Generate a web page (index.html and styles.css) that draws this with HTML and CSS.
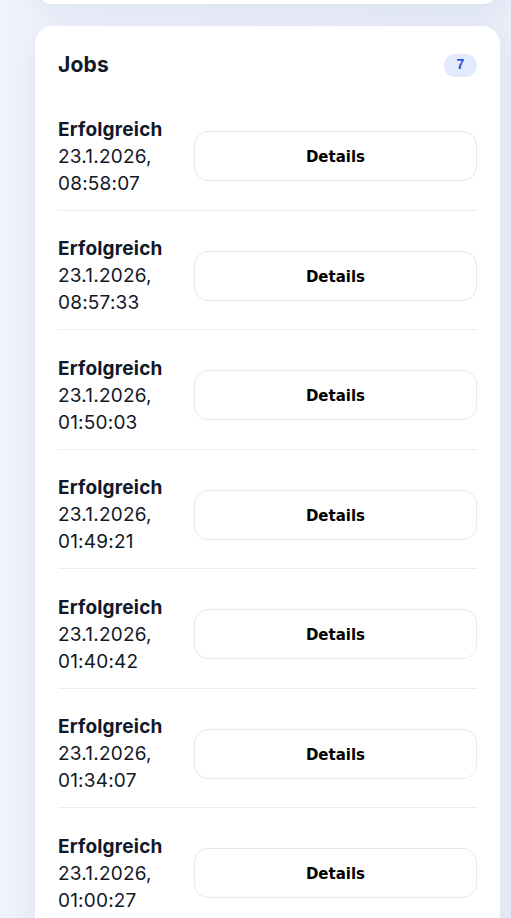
FILE: index.html
```html
<!DOCTYPE html>
<html lang="de">
<head>
  <meta charset="UTF-8">
  <meta name="viewport" content="width=device-width, initial-scale=1.0">
  <title>Jobs</title>
  <link rel="stylesheet" href="styles.css">
</head>
<body>

  <div class="page">
    <div class="card card-prev"></div>

    <div class="card jobs">
      <div class="jobs-header">
        <h2>Jobs</h2>
        <span class="badge">7</span>
      </div>

      <div class="job-row">
        <div class="job-info">
          <strong>Erfolgreich</strong>
          <span>23.1.2026, 08:58:07</span>
        </div>
        <button class="details-btn">Details</button>
      </div>

      <div class="job-row">
        <div class="job-info">
          <strong>Erfolgreich</strong>
          <span>23.1.2026, 08:57:33</span>
        </div>
        <button class="details-btn">Details</button>
      </div>

      <div class="job-row">
        <div class="job-info">
          <strong>Erfolgreich</strong>
          <span>23.1.2026, 01:50:03</span>
        </div>
        <button class="details-btn">Details</button>
      </div>

      <div class="job-row">
        <div class="job-info">
          <strong>Erfolgreich</strong>
          <span>23.1.2026, 01:49:21</span>
        </div>
        <button class="details-btn">Details</button>
      </div>

      <div class="job-row">
        <div class="job-info">
          <strong>Erfolgreich</strong>
          <span>23.1.2026, 01:40:42</span>
        </div>
        <button class="details-btn">Details</button>
      </div>

      <div class="job-row">
        <div class="job-info">
          <strong>Erfolgreich</strong>
          <span>23.1.2026, 01:34:07</span>
        </div>
        <button class="details-btn">Details</button>
      </div>

      <div class="job-row">
        <div class="job-info">
          <strong>Erfolgreich</strong>
          <span>23.1.2026, 01:00:27</span>
        </div>
        <button class="details-btn">Details</button>
      </div>
    </div>
  </div>

</body>
</html>
```

FILE: styles.css
```css
body {
  margin: 0;
  font-family: 'Inter', 'Noto Sans', sans-serif;
  color: #111827;
  background: linear-gradient(90deg, #eef3fd 0%, #e9eef9 100%);
  overflow: hidden;
}
.page {
  padding: 0 11px 0 35px;
}
.card {
  background-color: #ffffff;
  border-radius: 18px;
  box-shadow: 0 8px 30px rgba(30, 41, 80, 0.07);
}
.card-prev {
  height: 60px;
  margin-top: -56px;
  margin-bottom: 22px;
}
.jobs {
  padding: 23px 23px 20px 23px;
}
.jobs-header {
  display: flex;
  justify-content: space-between;
  align-items: center;
  height: 30px;
  margin-bottom: 12px;
}
.jobs-header h2 {
  margin: 0;
  font-size: 21px;
  font-weight: 700;
  letter-spacing: 0.2px;
}
.badge {
  display: inline-flex;
  align-items: center;
  justify-content: center;
  width: 33px;
  height: 23px;
  margin-top: 2px;
  border-radius: 12px;
  background-color: #e3eafd;
  color: #2f4fd8;
  font-family: 'Liberation Mono', monospace;
  font-weight: 700;
  font-size: 14px;
}
.job-row {
  display: grid;
  grid-template-columns: 120px 1fr;
  gap: 16px;
  align-items: center;
  padding: 24.5px 0 13px 0;
  border-bottom: 1px solid #ececf0;
}
.job-info {
  display: flex;
  flex-direction: column;
  font-size: 19px;
  line-height: 27px;
  letter-spacing: 0.2px;
}
.job-info strong {
  font-weight: 700;
}
.details-btn {
  height: 50px;
  padding-top: 3px;
  border: 1px solid #e8e8ee;
  border-radius: 14px;
  background-color: #ffffff;
  color: #000000;
  font-family: 'DejaVu Sans', sans-serif;
  font-weight: 700;
  font-size: 15px;
  cursor: pointer;
}
```
